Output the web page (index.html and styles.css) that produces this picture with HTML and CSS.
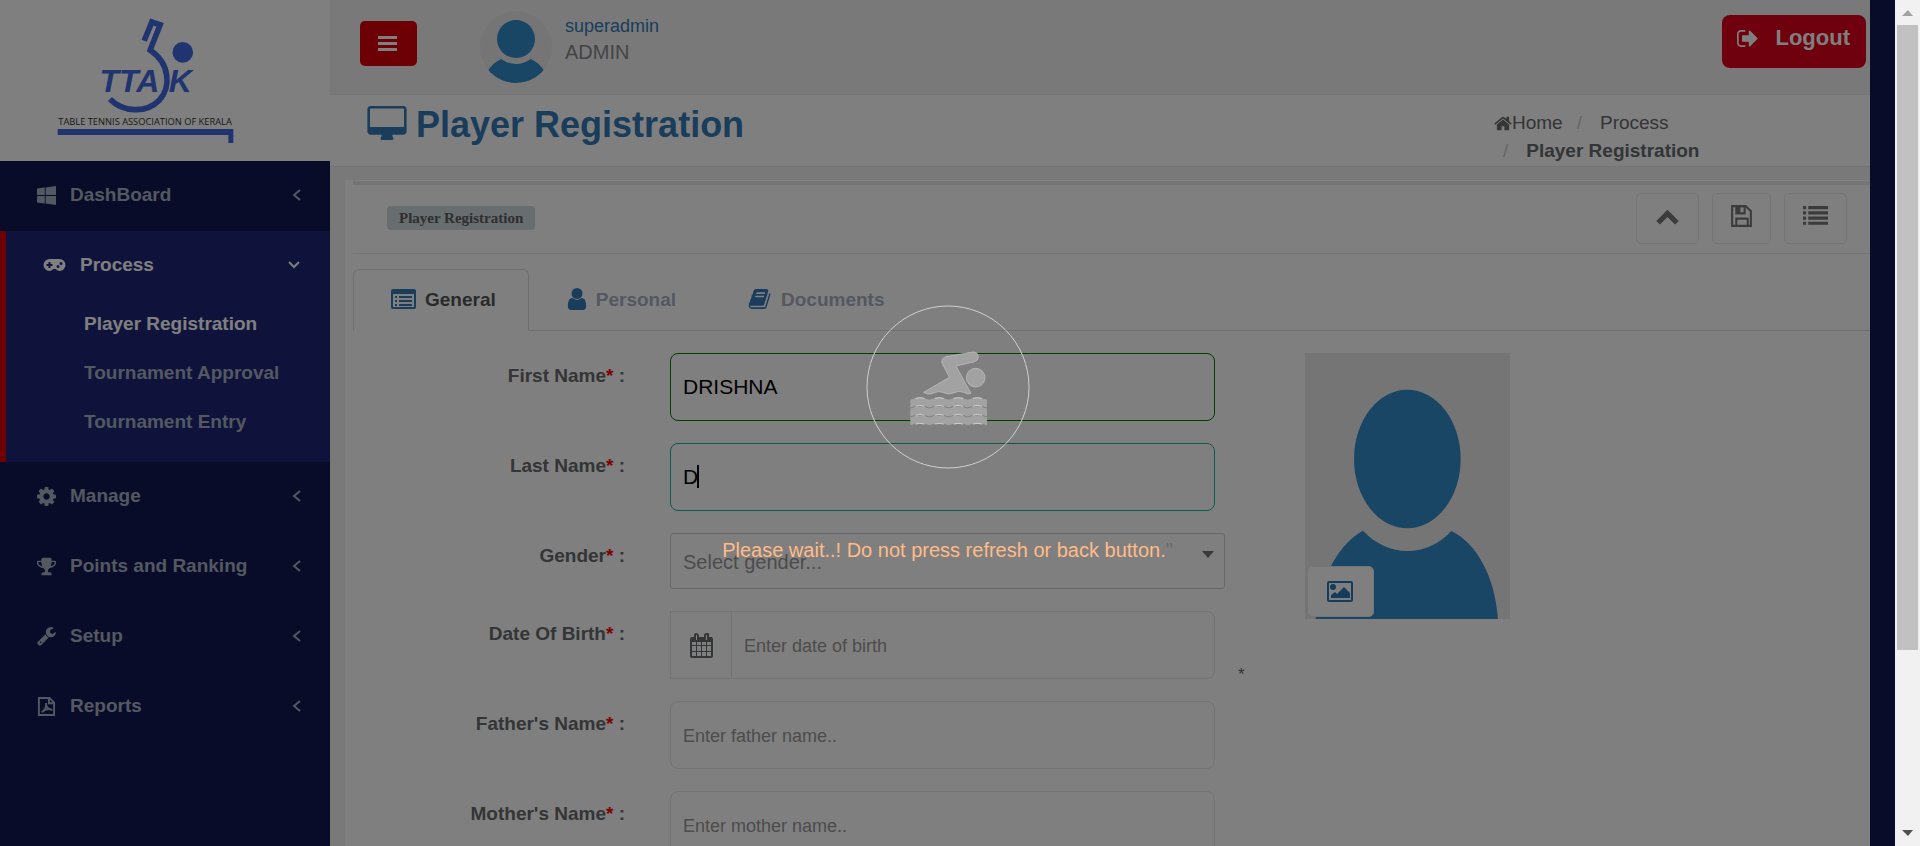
FILE: index.html
```html
<!DOCTYPE html>
<html lang="en">
<head>
<meta charset="utf-8">
<title>Player Registration</title>
<link rel="stylesheet" href="styles.css">
</head>
<body>
<div class="viewport">
  <div class="page">
    <nav class="sidebar">
      <a class="brand" href="#" aria-label="Table Tennis Association of Kerala">
        <svg class="brand-logo" viewBox="160 40 556 400">
          <path d="M434 122L457 66L482 74L452 150C512 190 515 262 480 300C440 342 368 336 331 297" fill="none" stroke="#4169e1" stroke-width="17"/>
          <circle cx="550" cy="157" r="31" fill="#4169e1"/>
          <text class="brand-mark" x="300" y="277">TTA</text>
          <text class="brand-mark" x="508" y="275">K</text>
          <text class="brand-name" x="176" y="375">TABLE TENNIS ASSOCIATION OF KERALA</text>
          <path d="M174 387H702V429H687V405H174Z" fill="#4169e1"/>
        </svg>
      </a>
      <ul class="menu">
        <li><a class="menu-link" href="#">
          <svg class="icon" viewBox="0 128 1664 1664"><path d="M682 1006v651l-682-94v-557h682zm0-743v659h-682v-565zm982 743v786l-907-125v-661h907zm0-878v794h-907v-669z"/></svg>
          <span>DashBoard</span><svg class="arrow" viewBox="0 0 12 12"><path d="M9 1L3 6L9 11"/></svg></a></li>
        <li class="active"><a class="menu-link" href="#">
          <svg class="icon pad" viewBox="0 0 22 20"><path fill-rule="evenodd" d="M6 4h10a6 6 0 0 1 0 12q-2 0-4-2h-2q-2 2-4 2a6 6 0 0 1 0-12zM5 7v2H3v2h2v2h2v-2h2V9H7V7zM14.500 10a1.500 1.500 0 1 0 0 3 1.500 1.500 0 0 0 0-3zM17.500 7a1.500 1.500 0 1 0 0 3 1.500 1.500 0 0 0 0-3z"/></svg>
          <span>Process</span><svg class="arrow" viewBox="0 0 12 12"><path d="M1 3L6 8L11 3"/></svg></a>
          <ul class="submenu">
            <li><a class="current" href="#">Player Registration</a></li>
            <li><a href="#">Tournament Approval</a></li>
            <li><a href="#">Tournament Entry</a></li>
          </ul></li>
        <li><a class="menu-link" href="#">
          <svg class="icon" viewBox="128 128 1536 1536"><path d="M1152 896q0-106-75-181t-181-75-181 75-75 181 75 181 181 75 181-75 75-181zm512-109v222q0 12-8 23t-20 13l-185 28q-19 54-39 91 35 50 107 138 10 12 10 25t-9 23q-27 37-99 108t-94 71q-12 0-26-9l-138-108q-44 23-91 38-16 136-29 186-7 28-36 28h-222q-14 0-24.500-8.500t-11.500-21.500l-28-184q-49-16-90-37l-141 107q-10 9-25 9-14 0-25-11-126-114-165-168-7-10-7-23 0-12 8-23 15-21 51-66.500t54-70.500q-27-50-41-99l-183-27q-13-2-21-12.500t-8-23.500v-222q0-12 8-23t19-13l186-28q14-46 39-92-40-57-107-138-10-12-10-24 0-10 9-23 26-36 98.500-107.500t94.500-71.500q13 0 26 10l138 107q44-23 91-38 16-136 29-186 7-28 36-28h222q14 0 24.500 8.500t11.500 21.500l28 184q49 16 90 37l142-107q9-9 24-9 13 0 25 10 129 119 165 170 7 8 7 22 0 12-8 23-15 21-51 66.500t-54 70.500q26 50 41 98l183 28q13 2 21 12.500t8 23.500z"/></svg>
          <span>Manage</span><svg class="arrow" viewBox="0 0 12 12"><path d="M9 1L3 6L9 11"/></svg></a></li>
        <li><a class="menu-link" href="#">
          <svg class="icon" viewBox="64 64 1664 1664"><path d="M522 883q-74-162-74-371h-256v96q0 78 94.500 162t235.500 113zm1078-275v-96h-256q0 209-74 371 141-29 235.500-113t94.500-162zm128-128v128q0 71-41.500 143t-112 130-173 97.500-215.500 44.500q-42 54-95 95-38 34-52.500 72.500t-14.500 89.500q0 54 30.500 91t97.500 37q75 0 133.500 45.500t58.500 114.500v64q0 14-9 23t-23 9h-832q-14 0-23-9t-9-23v-64q0-69 58.500-114.500t133.500-45.500q67 0 97.500-37t30.500-91q0-51-14.500-89.500t-52.500-72.500q-53-41-95-95-113-5-215.500-44.500t-173-97.500-112-130-41.500-143v-128q0-40 28-68t68-28h288v-96q0-66 47-113t113-47h576q66 0 113 47t47 113v96h288q40 0 68 28t28 68z"/></svg>
          <span>Points and Ranking</span><svg class="arrow" viewBox="0 0 12 12"><path d="M9 1L3 6L9 11"/></svg></a></li>
        <li><a class="menu-link" href="#">
          <svg class="icon" viewBox="64 128 1664 1664"><path d="M448 1472q0-26-19-45t-45-19-45 19-19 45 19 45 45 19 45-19 19-45zm644-420l-682 682q-37 37-90 37-52 0-91-37l-106-108q-38-36-38-90 0-53 38-91l681-681q39 98 114.500 173.500t173.500 114.500zm634-435q0 39-23 106-47 134-164.500 217.500t-258.500 83.500q-185 0-316.500-131.500t-131.500-316.500 131.500-316.500 316.500-131.500q58 0 121.500 16.500t107.500 46.500q16 11 16 28t-16 28l-293 169v224l193 107q5-3 79-48.500t135.500-81 70.500-35.500q15 0 23.500 10t8.500 25z"/></svg>
          <span>Setup</span><svg class="arrow" viewBox="0 0 12 12"><path d="M9 1L3 6L9 11"/></svg></a></li>
        <li><a class="menu-link" href="#">
          <svg class="icon line" viewBox="0 0 18 20"><path d="M1 1H12L17 6V19H1ZM11.500 1V6.500H17M4 16C7 14 9 10 8.500 6.500C8 10 11 13.500 15 13.500C11 12 7 13 4 16Z"/></svg>
          <span>Reports</span><svg class="arrow" viewBox="0 0 12 12"><path d="M9 1L3 6L9 11"/></svg></a></li>
      </ul>
    </nav>

    <main class="main">
      <header class="topbar">
        <button class="toggle" type="button" aria-label="Toggle menu"><svg viewBox="0 0 19 16"><path d="M0 0H19V3H0ZM0 6H19V9H0ZM0 12H19V15H0Z"/></svg></button>
        <svg class="avatar" viewBox="0 0 72 72"><defs><clipPath id="round"><circle cx="36" cy="36" r="36"/></clipPath></defs>
          <g clip-path="url(#round)"><path fill="#ebebeb" d="M0 0H72V72H0Z"/><ellipse cx="36" cy="28" rx="19" ry="19" fill="#318cc8"/><path fill="#318cc8" d="M2 72Q8 54 21 48Q36 58 51 48Q64 54 70 72Z"/></g></svg>
        <div class="who"><a href="#">superadmin</a><span>ADMIN</span></div>
        <button class="logout" type="button"><svg viewBox="64 256 1600 1280"><path d="M704 1440q0 4 1 20t.5 26.500-3 23.500-10 19.500-20.500 6.500h-320q-119 0-203.500-84.500t-84.500-203.500v-704q0-119 84.500-203.500t203.500-84.500h320q13 0 22.500 9.500t9.500 22.500q0 4 1 20t.5 26.500-3 23.500-10 19.500-20.500 6.500h-320q-66 0-113 47t-47 113v704q0 66 47 113t113 47h312l11.500 1 11.500 3 8 5.500 7 9 2 13.500zm928-544q0 26-19 45l-544 544q-19 19-45 19t-45-19-19-45v-288h-448q-26 0-45-19t-19-45v-384q0-26 19-45t45-19h448v-288q0-26 19-45t45-19 45 19l544 544q19 19 19 45z"/></svg><span>Logout</span></button>
      </header>

      <div class="heading">
        <h1><svg viewBox="0 0 1920 1664"><path d="M1792 992v-832q0-13-9.500-22.500t-22.500-9.500h-1600q-13 0-22.500 9.500t-9.500 22.500v832q0 13 9.500 22.500t22.500 9.500h1600q13 0 22.500-9.500t9.500-22.500zm128-832v1088q0 66-47 113t-113 47h-544q0 37 16 77.500t32 71 16 43.500q0 26-19 45t-45 19h-512q-26 0-45-19t-19-45q0-14 16-44t32-70 16-78h-544q-66 0-113-47t-47-113v-1088q0-66 47-113t113-47h1600q66 0 113 47t47 113z"/></svg>Player Registration</h1>
        <ol class="crumbs">
          <li><a href="#"><svg viewBox="64 192 1664 1408"><path d="M1472 992v480q0 26-19 45t-45 19h-384v-384h-256v384h-384q-26 0-45-19t-19-45v-480q0-1 .5-3t.5-3l575-474 575 474q1 2 1 6zm223-69l-62 74q-8 9-21 11h-3q-13 0-21-7l-692-577-692 577q-12 8-24 7-13-2-21-11l-62-74q-8-10-7-23.500t11-21.500l719-599q32-26 76-26t76 26l244 204v-195q0-14 9-23t23-9h192q14 0 23 9t9 23v408l219 182q10 8 11 21.500t-7 23.500z"/></svg>Home</a></li>
          <li><a href="#">Process</a></li>
          <li><strong>Player Registration</strong></li>
        </ol>
      </div>

      <section class="panel">
        <div class="panel-title">
          <span class="badge">Player Registration</span>
          <div class="tools">
            <button class="tool" type="button" aria-label="Collapse"><svg viewBox="0 0 24 22"><path fill="none" stroke="currentColor" stroke-width="5" d="M3 17L12 8L21 17"/></svg></button>
            <button class="tool slim" type="button" aria-label="Save"><svg viewBox="0 0 24 22"><path fill="none" stroke="currentColor" stroke-width="2" d="M3 1H16L21 6V20H3ZM7 20V13H18V20"/><path fill-rule="evenodd" d="M6 1H16V9H6ZM11 2V7H14V2Z"/></svg></button>
            <button class="tool" type="button" aria-label="List"><svg viewBox="0 0 24 22"><path d="M0 1H3V4H0ZM5 1H24V4H5ZM0 6H3V9H0ZM5 6H24V9H5ZM0 11H3V14H0ZM5 11H24V14H5ZM0 16H3V19H0ZM5 16H24V19H5Z"/></svg></button>
          </div>
        </div>

        <div class="tabs" role="tablist">
          <button class="tab selected" type="button" role="tab" aria-selected="true"><svg class="wide" viewBox="0 0 25 20"><path fill-rule="evenodd" d="M2 0H23Q25 0 25 2V18Q25 20 23 20H2Q0 20 0 18V2Q0 0 2 0ZM2 5V18H23V5ZM4 7H6V9H4ZM8 7H21V9H8ZM4 11H6V13H4ZM8 11H21V13H8ZM4 15H6V17H4ZM8 15H21V17H8Z"/></svg>General</button>
          <button class="tab" type="button" role="tab"><svg class="thin" viewBox="256 128 1280 1536"><path d="M1536 1399q0 109-62.500 187t-150.500 78h-854q-88 0-150.500-78t-62.500-187q0-85 8.500-160.500t31.500-152 58.500-131 94-89 134.500-34.500q131 128 313 128t313-128q76 0 134.500 34.500t94 89 58.500 131 31.500 152 8.500 160.500zm-256-887q0 159-112.500 271.500t-271.500 112.500-271.500-112.500-112.500-271.500 112.500-271.500 271.500-112.500 271.500 112.500 112.500 271.500z"/></svg>Personal</button>
          <button class="tab" type="button" role="tab"><svg class="wide" viewBox="64 128 1664 1536"><path d="M1703 478q40 57 18 129l-275 906q-19 64-76.500 107.500t-122.500 43.500h-923q-77 0-148.500-53.500t-99.500-131.500q-24-67-2-127 0-4 3-27t4-37q1-8-3-21.500t-3-19.500q2-11 8-21t16.500-23.500 16.500-23.500q23-38 45-91.500t30-91.500q3-10 .5-30t-.5-28q3-11 17-28t17-23q21-36 42-92t25-90q1-9-2.500-32t.5-28q4-13 22-30.500t22-22.500q19-26 42.500-84.500t27.500-96.500q1-8-3-25.500t-2-26.500q2-8 9-18t18-23 17-21q8-12 16.500-30.500t15-35 16-36 19.500-32 26.500-23.500 36-11.500 47.500 5.500l-1 3q38-9 51-9h761q74 0 114 56t18 130l-274 906q-36 119-71.500 153.500t-128.500 34.500h-869q-27 0-38 15-11 16-1 43 24 70 144 70h923q29 0 56-15.500t35-41.500l300-987q7-22 5-57 38 15 59 43zm-1064 2q-4 13 2 22.500t20 9.500h608q13 0 25.500-9.500t16.500-22.500l21-64q4-13-2-22.500t-20-9.500h-608q-13 0-25.500 9.500t-16.500 22.500zm-83 256q-4 13 2 22.500t20 9.500h608q13 0 25.500-9.500t16.500-22.500l21-64q4-13-2-22.500t-20-9.500h-608q-13 0-25.500 9.500t-16.500 22.500z"/></svg>Documents</button>
        </div>

        <div class="content">
          <form class="form">
            <div class="row"><label for="first">First Name<i>*</i> :</label><input id="first" class="field valid" type="text" value="DRISHNA"></div>
            <div class="row"><label for="last">Last Name<i>*</i> :</label><div class="caret-box"><input id="last" class="field focused" type="text" value="D"><span class="caret"></span></div></div>
            <div class="row"><label for="gender">Gender<i>*</i> :</label><div class="select-box"><select id="gender"><option>Select gender...</option></select><svg viewBox="0 0 12 7"><path d="M0 0H12L6 7Z"/></svg></div></div>
            <div class="row"><label for="dob">Date Of Birth<i>*</i> :</label><div class="date"><span class="addon"><svg viewBox="0 0 23 25"><path fill-rule="evenodd" d="M2 4H4V2Q4 0 6 0T9 2V4H14V2Q14 0 17 0T19 2V4H21Q23 4 23 6V23Q23 25 21 25H2Q0 25 0 23V6Q0 4 2 4ZM6 2V7H7V2ZM16 2V7H17V2ZM2 9V12H6V9ZM7 9V12H11V9ZM12 9V12H16V9ZM17 9V12H21V9ZM2 13V18H6V13ZM7 13V18H11V13ZM12 13V18H16V13ZM17 13V18H21V13ZM2 19V23H6V19ZM7 19V23H11V19ZM12 19V23H16V19ZM17 19V23H21V19Z"/></svg></span><input id="dob" class="field" type="text" placeholder="Enter date of birth"></div><span class="star">*</span></div>
            <div class="row"><label for="father">Father's Name<i>*</i> :</label><input id="father" class="field" type="text" placeholder="Enter father name.."></div>
            <div class="row"><label for="mother">Mother's Name<i>*</i> :</label><input id="mother" class="field" type="text" placeholder="Enter mother name.."></div>
          </form>
          <div class="photo">
            <svg class="portrait" viewBox="75 69 615 798"><path fill="#ebebeb" d="M75 69H690V867H75Z"/><ellipse cx="382" cy="387" rx="160" ry="208" fill="#318cc8"/><path fill="#318cc8" d="M107 867C120 740 180 638 249 602C325 683 440 683 514 603C590 640 645 740 654 867Z"/></svg>
            <button class="pick" type="button" aria-label="Choose picture"><svg viewBox="0 0 26 21"><path fill-rule="evenodd" d="M2 0H24Q26 0 26 2V19Q26 21 24 21H2Q0 21 0 19V2Q0 0 2 0ZM2 2V19H24V2Z"/><circle cx="6" cy="6" r="3"/><path d="M4 17V14L8 11L10 13L17 6L23 12V17Z"/></svg></button>
          </div>
        </div>
      </section>
    </main>
  </div>

  <div class="overlay" role="status">
    <svg class="swimmer" viewBox="77 46 492 492">
      <circle cx="323" cy="292" r="243" fill="none" stroke="#cfcfcf" stroke-width="3"/>
      <g fill="#a2a2a2" stroke="#c4c4c4" stroke-width="2">
        <path d="M316 201L398 187Q414 187 414 202Q413 214 400 217L347 229L392 311Q382 316 371 308Q354 302 342 309Q325 317 310 309Q295 302 282 309Q265 318 250 308L327 263L305 220Q302 206 316 201Z"/>
        <circle cx="406" cy="264" r="28"/>
      </g>
      <path fill="#a2a2a2" d="M210 330Q238 318 267 330Q296 318 325 330Q353 318 382 330Q410 318 440 330V407Q410 395 382 407Q353 395 325 407Q296 395 267 407Q238 395 210 407Z"/>
      <path fill="none" stroke="#808080" stroke-width="3" d="M210 355Q238 343 267 355Q296 343 325 355Q353 343 382 355Q410 343 440 355M210 382Q238 370 267 382Q296 370 325 382Q353 370 382 382Q410 370 440 382"/>
      <path fill="none" stroke="#d0d0d0" stroke-width="3" d="M226 326Q238 322 252 326M283 326Q296 322 310 326M340 326Q353 322 368 326M397 326Q410 322 425 326M226 350Q238 344 252 350M283 350Q296 344 310 350M340 350Q353 344 368 350M397 350Q410 344 425 350M226 377Q238 371 252 377M283 377Q296 371 310 377M340 377Q353 371 368 377M397 377Q410 371 425 377M226 403Q238 399 252 403M283 403Q296 399 310 403M340 403Q353 399 368 403M397 403Q410 399 425 403"/>
    </svg>
    <p><span>Please wait..! Do not press refresh or back button.</span>"</p>
  </div>
</div>
<div class="scrollbar" aria-hidden="true">
  <svg viewBox="0 0 25 25"><path fill="#a3a3a3" d="M7 16L13 10L18 16Z"/></svg>
  <div class="track"><div class="thumb"></div></div>
  <svg viewBox="0 0 25 25"><path fill="#505050" d="M7 9H18L13 15Z"/></svg>
</div>
</body>
</html>
```
FILE: styles.css
```css
* { box-sizing: border-box; }
body { margin: 0; display: flex; height: 100vh; overflow: hidden; font: 20px/28px "Liberation Sans", Arial, sans-serif; color: #676a6c; }
a { color: inherit; text-decoration: none; }
ul, ol { list-style: none; margin: 0; padding: 0; }
button, input, select { font: inherit; color: inherit; margin: 0; }
svg { display: block; fill: currentColor; flex: none; }

.viewport { flex: 1; min-width: 0; position: relative; overflow: hidden; background: #121852; }
.page { display: flex; min-height: 100%; padding-right: 25px; }

/* Sidebar */
.sidebar { width: 330px; flex: none; color: #a7b1c2; font-weight: bold; font-size: 19px; }
.brand { display: block; background: #fff; height: 161px; padding: 13px 53px; }
.brand-logo { width: 185px; height: 134px; }
.brand-mark { font: italic bold 96px "Liberation Sans Narrow", "Liberation Sans", sans-serif; fill: #4169e1; }
.brand-name { font: 28px "Open Sans", sans-serif; fill: #333; }
.menu-link { display: flex; align-items: center; height: 70px; padding: 0 27px 2px 37px; }
.menu-link .icon { width: 19px; height: 19px; margin-right: 14px; }
.menu-link .icon.pad { width: 23px; height: 20px; }
.icon.line { fill: none; stroke: currentColor; stroke-width: 2; }
.arrow { width: 12px; height: 12px; margin-left: auto; fill: none; stroke: currentColor; stroke-width: 2; }
.active { background: #1e2676; color: #fff; border-left: 6px solid #da0008; padding-bottom: 14px; }
.active .menu-link { padding-right: 30px; }
.submenu { color: #a7b1c2; }
.submenu a { display: block; padding: 9px 0 12px 78px; }
.submenu .current { color: #fff; }

/* Top bar */
.main { flex: 1; min-width: 0; background: #f3f3f4; }
.topbar { display: flex; align-items: flex-start; height: 95px; padding: 11px 4px 0 30px; border-bottom: 1px solid #e7eaec; }
.toggle { width: 57px; height: 45px; margin: 10px 63px 0 0; padding: 0 18px; border: 0; border-radius: 5px; background: #da0008; color: #fff; }
.toggle svg { width: 19px; height: 16px; }
.avatar { width: 72px; height: 72px; }
.who { display: grid; margin-left: 13px; line-height: 26px; padding-top: 2px; }
.who a { font-size: 18px; color: #337ab7; }
.who span { color: #888; font-size: 20px; }
.logout { display: flex; align-items: center; gap: 17px; height: 53px; margin: 4px 0 0 auto; padding: 0 16px 7px 15px; border: 0; border-radius: 8px; background: #de001a; color: #fff; font-size: 22px; font-weight: bold; }
.logout svg { width: 21px; height: 17px; }

/* Page heading */
.heading { display: flex; justify-content: space-between; height: 72px; padding: 0 150px 0 37px; background: #fff; border-bottom: 1px solid #e7eaec; }
.heading h1 { display: flex; gap: 9px; margin: 0; padding-top: 10px; font-size: 36px; line-height: 40px; color: #337ab7; }
.heading h1 svg { width: 40px; height: 34px; margin-top: 1px; }
.crumbs { display: flex; flex-wrap: wrap; width: 226px; padding-top: 15px; line-height: 26px; font-size: 19px; align-content: flex-start; }
.crumbs li + li::before { content: "/"; color: #ccc; padding: 0 18px 0 9px; }
.crumbs li + li { margin-left: 5px; }
.crumbs li:last-child { margin-left: 0; }
.crumbs a { display: inline-flex; align-items: center; }
.crumbs svg { width: 18px; height: 15px; }

/* Panel */
.panel { margin: 13px 0 0 15px; padding: 1px 0 0 8px; background: #fff; }
.panel-title { display: flex; align-items: flex-start; justify-content: space-between; height: 73px; padding: 8px 23px 0 34px; border-top: 4px solid #e7eaec; border-bottom: 1px solid #e7eaec; }
.badge { margin-top: 13px; padding: 0 12px; border-radius: 4px; background: #d1dade; color: #5e5e5e; font: bold 15px/24px "Liberation Serif", serif; }
.tools { display: flex; gap: 13px; }
.tool { width: 63px; height: 51px; padding: 0 18px 5px; border: 1px solid #e7eaec; border-radius: 5px; background: #fff; color: #777; }
.tool.slim { width: 59px; padding: 0 16px 5px; }
.tool svg { width: 25px; height: 23px; }

.tabs { display: flex; margin-top: 15px; border-bottom: 1px solid #dddddd; }
.tab { display: flex; align-items: center; gap: 9px; height: 62px; margin-bottom: -1px; padding: 0 32px 0 37px; border: 1px solid transparent; background: none; color: #a7b1c2; font-weight: bold; font-size: 19px; }
.tab.selected { border-color: #ddd #ddd #fff; border-radius: 6px 6px 0 0; background: #fff; color: #555; }
.tab svg { color: #337ab7; width: 25px; height: 20px; margin-bottom: 3px; }
.tab svg.thin { width: 20px; height: 22px; }

.content { display: grid; grid-template-columns: minmax(0, 902fr) minmax(0, 565fr); gap: 50px; padding-top: 22px; }
.form { display: grid; gap: 22px; margin: 0; align-content: start; }
.row { display: grid; grid-template-columns: minmax(0, 317fr) minmax(0, 545fr) 40px; }
.row label { padding: 9px 45px 0 0; text-align: right; font-weight: bold; font-size: 19px; }
.row i { color: #f00; font-style: normal; }
.field { width: 100%; height: 68px; padding: 0 12px; border: 1px solid #e5e6e7; border-radius: 8px; background: #fff; color: #000; font-size: 21px; outline: 0; }
.field::placeholder { color: #999; font-size: 18px; opacity: 1; }
.field.valid { border-color: #008000; }
.field.focused { border-color: #1ab394; }
.caret-box, .select-box { position: relative; }
.caret { position: absolute; left: 27px; top: 22px; width: 2px; height: 23px; background: #000; }
.select-box { margin-right: -10px; }
.select-box select { appearance: none; display: block; width: 100%; height: 56px; padding: 2px 12px 0; border: 1px solid #ccd0d4; border-radius: 3px; background: #fff; color: #999; }
.select-box svg { position: absolute; right: 11px; top: 18px; width: 12px; height: 7px; color: #777; }
.date { display: flex; }
.date .addon { display: grid; place-items: center; width: 61px; border: 1px solid #e5e6e7; border-right: 0; }
.date .addon svg { width: 23px; height: 25px; }
.date .field { flex: 1; min-width: 0; border-radius: 0 8px 8px 0; }
.star { padding-left: 23px; align-self: end; font-size: 17px; line-height: 8px; }
.photo { position: relative; width: 205px; height: 266px; }
.portrait { width: 100%; height: 100%; }
.pick { position: absolute; left: 2px; bottom: 2px; width: 67px; height: 51px; padding: 0 19px; border: 1px solid #e7eaec; border-radius: 5px; background: #fff; color: #2a78b5; }
.pick svg { width: 26px; height: 21px; }

/* Waiting overlay */
.overlay { position: absolute; inset: 0; display: flex; flex-direction: column; align-items: center; padding-top: 305px; background: rgba(0, 0, 0, .5); }
.swimmer { width: 164px; height: 164px; }
.overlay p { margin: 67px 0 0; color: #676a6c; font-size: 20px; }
.overlay p span { color: #fb8; }

/* Window scrollbar */
.scrollbar { width: 25px; flex: none; display: flex; flex-direction: column; background: #f1f1f1; }
.scrollbar svg { width: 25px; height: 25px; }
.track { flex: 1; display: flex; flex-direction: column; padding: 0 2px; }
.thumb { flex: 11; background: #c1c1c1; }
.track::after { content: ""; flex: 3; }
```
